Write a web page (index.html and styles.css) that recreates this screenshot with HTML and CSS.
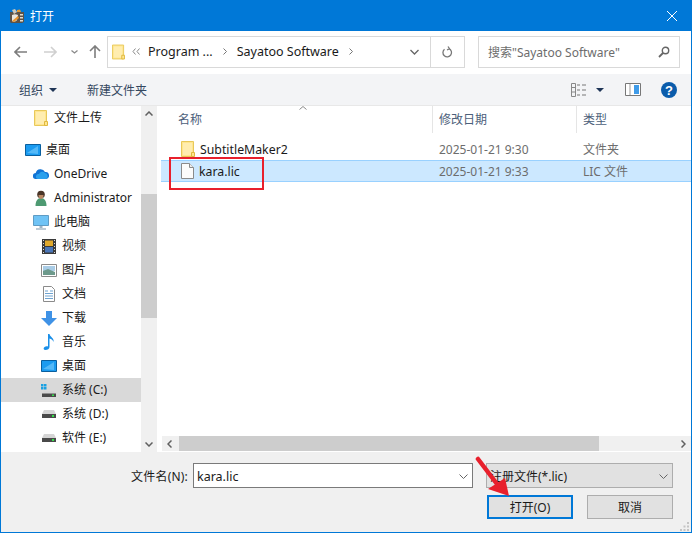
FILE: index.html
```html
<!DOCTYPE html>
<html lang="zh-CN">
<head>
    <meta charset="UTF-8">
    <title>打开</title>
    <link rel="stylesheet" href="styles.css">
</head>
<body>
    <svg class="defs" width="0" height="0">
        <symbol id="folder" viewBox="0 0 14 16">
            <path d="M.5.5h12v15H.5z" fill="#ffe68f" stroke="#e8c85a"/>
            <path d="M2 2h9v12H2z" fill="#ffedb0"/>
            <path d="M10.5 11.5h3v4h-3z" fill="#ffe68f" stroke="#e0b93e"/>
        </symbol>
        <symbol id="desktop" viewBox="0 0 16 12">
            <path d="M.5.5h15v11H.5z" fill="#1b9bf0" stroke="#0a5f9e"/>
            <path d="M2 9 13 2v8z" fill="#55b9f7"/>
        </symbol>
        <symbol id="drive" viewBox="0 0 14 8">
            <path d="M2 0h10l2 4H0z" fill="#d5d5d5"/>
            <path d="M0 4h14v4H0z" fill="#4a4a4a"/>
            <path d="M10 5h2v2h-2z" fill="#35e04a"/>
        </symbol>
    </svg>

    <div class="window">
        <div class="titlebar">
            <svg class="app-icon" width="16" height="15" viewBox="0 0 16 15">
                <path d="M1 3h14v10l-2 1H2l-1-1z" fill="#5b5249"/>
                <path d="M3 1l3-1 2 3-3 2z" fill="#cfc8bb"/>
                <path d="M8 1l3-.5L12 3H8z" fill="#e39a35"/>
                <path d="M3 6c2-1 4-1 6 0l-1 5c-1 2-4 2-5 1z" fill="#e9e6df"/>
                <path d="M3 12l6-5 1 2-5 4z" fill="#e8932c"/>
                <path d="M11 5h3v1.500h-3zM11 8h3v1.500h-3zM11 11h3v1.500h-3z" fill="#e2dccf"/>
            </svg>
            <span class="title">打开</span>
            <svg class="close" width="10" height="10" viewBox="0 0 10 10"><path d="M0 0l10 10M10 0 0 10" stroke="#fff" fill="none"/></svg>
        </div>

        <div class="nav">
            <svg class="nav-btn" width="13" height="12" viewBox="0 0 13 12"><path d="M6 1 1 6l5 5M1 6h12" stroke="#7d7d7d" stroke-width="1.6" fill="none"/></svg>
            <svg class="nav-btn fwd" width="13" height="12" viewBox="0 0 13 12"><path d="M7 1l5 5-5 5M12 6H0" stroke="#d0d0d0" stroke-width="1.6" fill="none"/></svg>
            <svg class="nav-btn recent" width="7" height="4" viewBox="0 0 7 4"><path d="M.5.5 3.5 3l3-2.5" stroke="#8a8a8a" stroke-width="1.3" fill="none"/></svg>
            <svg class="nav-btn up" width="12" height="13" viewBox="0 0 12 13"><path d="M1 6l5-5 5 5M6 1v12" stroke="#7d7d7d" stroke-width="1.6" fill="none"/></svg>

            <div class="address">
                <svg class="addr-folder" width="13" height="16"><use href="#folder"/></svg>
                <svg class="crumb-more" width="8" height="7" viewBox="0 0 8 7"><path d="M3.5.5 1 3.5l2.5 3M7.5.5 5 3.5l2.5 3" stroke="#888" fill="none"/></svg>
                <span class="crumb">Program ...</span>
                <svg class="crumb-sep" width="4" height="7" viewBox="0 0 4 7"><path d="M.5.5l3 3-3 3" stroke="#777" fill="none"/></svg>
                <span class="crumb">Sayatoo Software</span>
                <svg class="crumb-sep" width="4" height="7" viewBox="0 0 4 7"><path d="M.5.5l3 3-3 3" stroke="#777" fill="none"/></svg>
                <svg class="addr-drop" width="9" height="6" viewBox="0 0 9 6"><path d="M.5 1 4.5 5l4-4" stroke="#666" stroke-width="1.3" fill="none"/></svg>
                <div class="refresh">
                    <svg width="11" height="12" viewBox="0 0 11 12"><path d="M7 2.6A4.3 4.3 0 1 1 2.5 3.2M6 .5l1.5 2.2L5 4" stroke="#777" stroke-width="1.3" fill="none"/></svg>
                </div>
            </div>

            <div class="search">
                <span>搜索"Sayatoo Software"</span>
                <svg width="12" height="12" viewBox="0 0 12 12"><circle cx="7.5" cy="4.5" r="3.2" stroke="#666" stroke-width="1.4" fill="none"/><path d="M5 7 1 11" stroke="#666" stroke-width="1.8"/></svg>
            </div>
        </div>

        <div class="toolbar">
            <span class="tool">组织</span>
            <span class="caret"></span>
            <span class="tool new-folder">新建文件夹</span>
            <svg class="view-icon" width="16" height="14" viewBox="0 0 16 14"><path d="M.5.5h4v13h-4zM.5 4.500h4M.5 9h4" stroke="#888" fill="none"/><path d="M6 2h3M11 2h4M6 7h3M11 7h4M6 12h3M11 12h4" stroke="#777"/></svg>
            <span class="caret view-caret"></span>
            <svg class="pane-icon" width="16" height="13" viewBox="0 0 16 13"><path d="M.5.5h15v12H.5z" fill="#fff" stroke="#777"/><path d="M9 2h5v9H9z" fill="#3f9be8"/><path d="M5 1v11" stroke="#999"/></svg>
            <svg class="help-icon" width="16" height="16" viewBox="0 0 16 16"><circle cx="8" cy="8" r="8" fill="#0b5cab"/><text x="8" y="12.5" class="help-mark" text-anchor="middle">?</text></svg>
        </div>

        <div class="main">
            <div class="sidebar">
                <ul class="tree">
                    <li class="node lv2"><svg class="ico" width="14" height="16"><use href="#folder"/></svg><span class="label">文件上传</span></li>
                    <li class="node lv1 group-start"><svg class="ico" width="16" height="12"><use href="#desktop"/></svg><span class="label">桌面</span></li>
                    <li class="node lv2">
                        <svg class="ico" width="16" height="10" viewBox="0 0 16 10"><path d="M3 10a3 3 0 0 1-.3-6A5 5 0 0 1 12 3a3.4 3.4 0 0 1 1 7z" fill="#1173d4"/><path d="M5 10a2.500 2.500 0 0 1 1-5 3.500 3.500 0 0 1 6-1 3.200 3.200 0 0 1 1 6z" fill="#2ba0ec"/></svg>
                        <span class="label">OneDrive</span>
                    </li>
                    <li class="node lv2">
                        <svg class="ico" width="14" height="16" viewBox="0 0 14 16"><path d="M1.500 16c0-5 2-8 5.500-8s5.500 3 5.500 8z" fill="#4e9a72"/><circle cx="7" cy="4.500" r="3.800" fill="#4a3528"/><path d="M4.500 5h5c0 2.500-1 4-2.500 4S4.500 7.500 4.500 5z" fill="#b98763"/></svg>
                        <span class="label">Administrator</span>
                    </li>
                    <li class="node lv2">
                        <svg class="ico" width="16" height="15" viewBox="0 0 16 15"><path d="M.5.5h15v10H.5z" fill="#6fc3f5" stroke="#5f9cc4"/><path d="M6.500 11h3v2h-3z" fill="#9eb4c4"/><path d="M3 13.500h10v1H3z" fill="#7b97ab"/></svg>
                        <span class="label">此电脑</span>
                    </li>
                    <li class="node lv3">
                        <svg class="ico" width="14" height="15" viewBox="0 0 14 15"><path d="M0 0h14v15H0z" fill="#3a3a3a"/><path d="M3 1.500h8v5.500H3z" fill="#e0a92c"/><path d="M3 8h8v5.500H3z" fill="#4a76b8"/><path d="M1 1h1v1H1zM1 4h1v1H1zM1 7h1v1H1zM1 10h1v1H1zM1 13h1v1H1zM12 1h1v1h-1zM12 4h1v1h-1zM12 7h1v1h-1zM12 10h1v1h-1zM12 13h1v1h-1z" fill="#ddd"/></svg>
                        <span class="label">视频</span>
                    </li>
                    <li class="node lv3">
                        <svg class="ico" width="16" height="13" viewBox="0 0 16 13"><path d="M.5.500h15v12H.5z" fill="#fff" stroke="#8b8b8b"/><path d="M2 2h12v5H2z" fill="#a9cce6"/><path d="M2 7l5-2 7 3v3H2z" fill="#6d9a8c"/></svg>
                        <span class="label">图片</span>
                    </li>
                    <li class="node lv3">
                        <svg class="ico doc" width="12" height="16" viewBox="0 0 12 16"><path d="M.5.500h8l3 3v12H.5z" fill="#fff" stroke="#8b8b8b"/><path d="M2 5h3M7 5h3M2 7.500h8M2 10h8M2 12.500h8" stroke="#6fa3d0"/></svg>
                        <span class="label">文档</span>
                    </li>
                    <li class="node lv3">
                        <svg class="ico" width="16" height="15" viewBox="0 0 16 15"><path d="M5 0h6v7h5l-8 8-8-8h5z" fill="#3f92e6"/></svg>
                        <span class="label">下载</span>
                    </li>
                    <li class="node lv3">
                        <svg class="ico doc" width="12" height="16" viewBox="0 0 12 16"><path d="M5 0h1.500c.5 3 5 4 4 8-.5-2-2-3-4-3.500V13c0 2-2 3-4 3-2 0-2.500-2-1-3 1-.8 2.500-1 3.500-.5z" fill="#1a8fe8"/></svg>
                        <span class="label">音乐</span>
                    </li>
                    <li class="node lv3"><svg class="ico" width="16" height="12"><use href="#desktop"/></svg><span class="label">桌面</span></li>
                    <li class="node lv3 current">
                        <svg class="ico" width="16" height="13" viewBox="0 0 16 13"><path d="M0 0h2.500v2.500H0zM3 0h2.500v2.500H3zM0 3h2.500v2.500H0zM3 3h2.500v2.500H3z" fill="#1ba1e2"/><path d="M3 7h10l2 3H1z" fill="#d5d5d5"/><path d="M1 9.500h14V13H1z" fill="#4a4a4a"/><path d="M11 10.500h2v1.500h-2z" fill="#35e04a"/></svg>
                        <span class="label">系统 (C:)</span>
                    </li>
                    <li class="node lv3"><svg class="ico" width="16" height="8"><use href="#drive"/></svg><span class="label">系统 (D:)</span></li>
                    <li class="node lv3"><svg class="ico" width="16" height="8"><use href="#drive"/></svg><span class="label">软件 (E:)</span></li>
                </ul>
                <div class="vscroll">
                    <svg class="sb-arrow" width="8" height="5" viewBox="0 0 8 5"><path d="M.5 4.500 4 1l3.500 3.500" stroke="#606060" stroke-width="1.500" fill="none"/></svg>
                    <div class="vtrack"><div class="vthumb"></div></div>
                    <svg class="sb-arrow" width="8" height="5" viewBox="0 0 8 5"><path d="M.5.500 4 4 7.500.5" stroke="#606060" stroke-width="1.500" fill="none"/></svg>
                </div>
            </div>

            <div class="files">
                <div class="file-head">
                    <span class="col col-name">名称</span>
                    <span class="col col-date">修改日期</span>
                    <span class="col col-type">类型</span>
                    <svg class="sort-mark" width="8" height="4" viewBox="0 0 8 4"><path d="M.5 3.500 4 .5l3.500 3" stroke="#8a8a8a" fill="none"/></svg>
                </div>
                <div class="file-list">
                    <div class="file-row">
                        <span class="cell-name"><svg class="file-ico" width="14" height="16"><use href="#folder"/></svg>SubtitleMaker2</span>
                        <span class="cell-date">2025-01-21 9:30</span>
                        <span class="cell-type">文件夹</span>
                    </div>
                    <div class="file-row selected">
                        <span class="cell-name"><svg class="file-ico" width="13" height="16" viewBox="0 0 13 16"><path d="M.5.500h8l4 4v11H.5z" fill="#fbfbfb" stroke="#8a8a8a"/><path d="M8.500.500v4h4" fill="#eee" stroke="#8a8a8a"/></svg>kara.lic</span>
                        <span class="cell-date">2025-01-21 9:33</span>
                        <span class="cell-type">LIC 文件</span>
                    </div>
                </div>
                <div class="hscroll">
                    <svg class="hs-arrow" width="5" height="8" viewBox="0 0 5 8"><path d="M4.500.500 1 4l3.500 3.500" stroke="#606060" stroke-width="1.500" fill="none"/></svg>
                    <div class="htrack"><div class="hthumb"></div></div>
                    <svg class="hs-arrow" width="5" height="8" viewBox="0 0 5 8"><path d="M.500.500 4 4 .500 7.500" stroke="#606060" stroke-width="1.500" fill="none"/></svg>
                </div>
            </div>
        </div>

        <div class="footer">
            <div class="name-row">
                <label class="name-label">文件名(N):</label>
                <div class="name-input">
                    <span>kara.lic</span>
                    <svg width="9" height="5" viewBox="0 0 9 5"><path d="M.5.500l4 4 4-4" stroke="#666" fill="none"/></svg>
                </div>
                <div class="type-select">
                    <span>注册文件(*.lic)</span>
                    <svg width="9" height="5" viewBox="0 0 9 5"><path d="M.5.500l4 4 4-4" stroke="#666" fill="none"/></svg>
                </div>
            </div>
            <div class="btn-row">
                <button class="btn primary">打开(O)</button>
                <button class="btn">取消</button>
            </div>
            <svg class="grip" width="9" height="9" viewBox="0 0 9 9"><path d="M7 0h2v2H7zM3.500 3.500h2v2h-2zM7 3.500h2v2H7zM0 7h2v2H0zM3.500 7h2v2h-2zM7 7h2v2H7z" fill="#c4c4c4"/></svg>
        </div>

        <div class="callout"></div>
        <svg class="pointer" width="36" height="42" viewBox="0 0 36 42"><path d="M3 3 22 28" stroke="#e8202c" stroke-width="4.500" stroke-linecap="round"/><path d="M34 40 13 33 30 22z" fill="#e8202c"/></svg>
    </div>
</body>
</html>
```

FILE: styles.css
```css
* { margin: 0; padding: 0; box-sizing: border-box; }
html, body { width: 692px; height: 533px; overflow: hidden; }
body { font-family: "Noto Sans", "Noto Sans CJK SC", sans-serif; font-size: 12px; color: #1a1a1a; background: #fff; }
svg { display: block; flex: none; }
.defs { position: absolute; }
ul { list-style: none; }

.window { position: relative; width: 692px; height: 533px; border: 1px solid #0078d7; display: flex; flex-direction: column; background: #fff; }

.titlebar { height: 30px; background: #0078d7; color: #fff; display: flex; align-items: center; padding: 0 7px 0 8px; flex: none; }
.title { margin-left: 5px; font-size: 12px; }
.close { margin-left: auto; margin-right: 7px; }

.nav { height: 43px; display: flex; align-items: center; flex: none; padding: 0 0 2px 13px; }
.nav-btn.fwd { margin-left: 17px; }
.nav-btn.recent { margin-left: 14px; }
.nav-btn.up { margin-left: 11px; }
.address { width: 358px; height: 32px; margin-left: 6px; border: 1px solid #d9d9d9; display: flex; align-items: center; padding-left: 4px; }
.addr-folder { margin-right: 7px; }
.crumb-more { margin-right: 8px; }
.crumb { font-size: 12.500px; white-space: nowrap; }
.crumb-sep { margin: 0 10px; }
.addr-drop { margin-left: auto; margin-right: 11px; }
.refresh { width: 34px; height: 100%; border-left: 1px solid #d9d9d9; display: flex; align-items: center; justify-content: center; }
.search { width: 202px; height: 32px; margin-left: 13px; border: 1px solid #d9d9d9; display: flex; align-items: center; justify-content: space-between; padding: 0 9px; color: #6d6d6d; white-space: nowrap; }

.toolbar { height: 32px; background: #f3f4f6; border-bottom: 1px solid #e8e8e8; display: flex; align-items: center; flex: none; padding-left: 18px; }
.tool { color: #33475f; }
.caret { width: 0; height: 0; border: 4px solid transparent; border-top: 4px solid #1f3556; border-bottom: 0; margin-left: 6px; }
.new-folder { margin-left: 30px; }
.view-icon { margin-left: auto; }
.view-caret { margin-left: 9px; }
.pane-icon { margin-left: 21px; }
.help-icon { margin-left: 20px; margin-right: 14px; }
.help-mark { font-family: "Liberation Sans", sans-serif; font-size: 13px; font-weight: bold; fill: #fff; }

.main { height: 346px; display: flex; flex: none; }
.sidebar { width: 156px; display: flex; flex: none; }
.tree { width: 140px; overflow: hidden; }
.node { height: 24px; display: flex; align-items: center; white-space: nowrap; }
.node .label { padding-bottom: 2px; }
.node .ico { margin-right: 5px; }
.lv1 { padding-left: 24px; }
.lv2 { padding-left: 32px; }
.lv2 .ico { margin-left: 0; width: 16px; }
.lv3 { padding-left: 40px; }
.lv3 .ico { width: 16px; margin-right: 5px; }
.group-start { margin-top: 8px; }
.current { background: #d9d9d9; }

.vscroll { width: 16px; background: #f0f0f0; display: flex; flex-direction: column; align-items: center; padding: 5px 0 5px; }
.vtrack { flex: 1; width: 100%; margin: 4px 0; position: relative; display: flex; flex-direction: column; padding-top: 74px; }
.vthumb { height: 124px; background: #cdcdcd; }

.files { flex: 1; margin-left: 4px; display: flex; flex-direction: column; min-width: 0; }
.file-head { height: 27px; display: grid; grid-template-columns: 272px 144px 1fr; position: relative; flex: none; }
.col { display: flex; align-items: center; padding: 0 0 2px 6px; color: #4c607a; border-right: 1px solid #e5e5e5; }
.col-name { padding-left: 17px; }
.col-type { border-right: 0; }
.sort-mark { position: absolute; left: 138px; top: 0; }

.file-list { flex: 1; padding-top: 5px; }
.file-row { height: 22px; display: grid; grid-template-columns: 272px 144px 1fr; align-items: center; white-space: nowrap; }
.file-row.selected { background: #cce8ff; border: 1px solid #99d1ff; border-right: 0; border-left: 0; }
.cell-name { display: flex; align-items: center; padding-left: 20px; font-size: 12.300px; }
.file-ico { margin-right: 5px; }
.cell-date, .cell-type { padding-left: 6px; color: #6d6d6d; }

.hscroll { height: 15px; margin-bottom: 1px; background: #f0f0f0; display: flex; align-items: center; padding: 0 5px; flex: none; margin-left: 1px; }
.htrack { flex: 1; height: 100%; margin: 0 5px 0 7px; }
.hthumb { width: 420px; height: 100%; background: #cdcdcd; }

.footer { flex: 1; background: #f0f0f0; padding-top: 11px; position: relative; }
.name-row { display: flex; align-items: stretch; height: 25px; }
.name-label { width: 187px; text-align: right; line-height: 27px; letter-spacing: .2px; }
.name-input { width: 280px; margin-left: 5px; background: #fff; border: 1px solid #7a7a7a; display: flex; align-items: center; justify-content: space-between; padding: 1px 4px 0 3px; font-size: 12.500px; }
.type-select { width: 187px; margin-left: 13px; background: #e1e1e1; border: 1px solid #adadad; display: flex; align-items: center; justify-content: space-between; padding: 1px 4px 0 3px; }
.btn-row { display: flex; justify-content: flex-end; gap: 14px; margin-top: 7px; padding-right: 18px; }
.btn { width: 86px; height: 24px; background: #e1e1e1; border: 1px solid #adadad; font: inherit; color: #1a1a1a; }
.btn.primary { border: 2px solid #0078d7; }
.grip { position: absolute; right: 2px; bottom: 1px; }

.callout { position: absolute; left: 168px; top: 156px; width: 95px; height: 33px; border: 2px solid #e8202c; }
.pointer { position: absolute; left: 474px; top: 455px; }
```
